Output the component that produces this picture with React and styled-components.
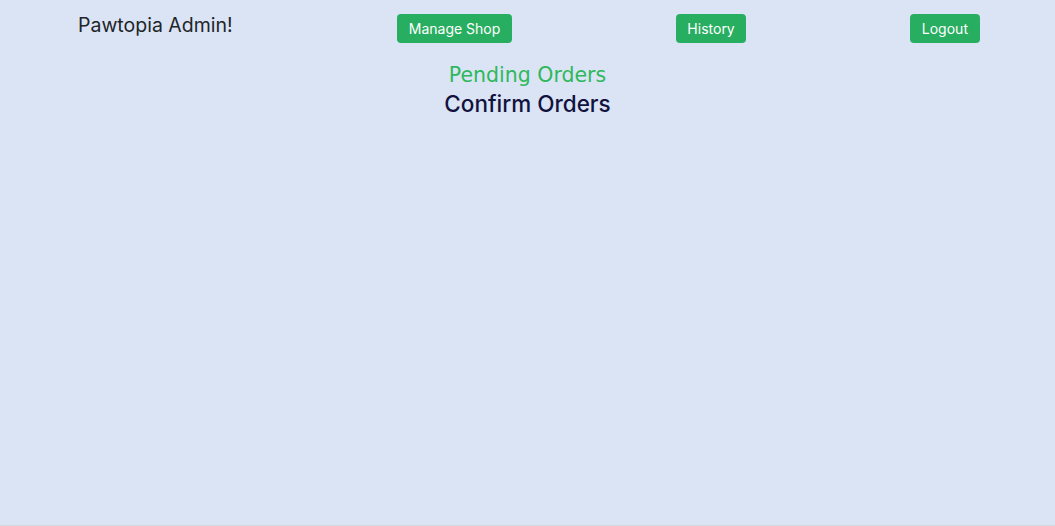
import React from 'react';
import styled, { createGlobalStyle } from 'styled-components';

const GlobalStyle = createGlobalStyle`
  html, body {
    margin: 0;
    padding: 0;
    background: #dbe4f4;
    font-family: Inter, "Noto Sans", sans-serif;
  }
`;

const Page = styled.div`
  min-height: 525px;
  border-bottom: 1px solid #d4d8de;
`;

const Header = styled.header`
  display: flex;
  justify-content: space-between;
  align-items: flex-start;
  padding: 14px 75px 0 78px;
`;

const Brand = styled.h1`
  margin: 0;
  font-size: 19.5px;
  font-weight: 400;
  line-height: 22px;
  color: #212529;
`;

const NavButton = styled.button`
  height: 29px;
  padding: 0 ${(p) => p.$pad || 12}px;
  border: none;
  border-radius: 4px;
  background: #27ae60;
  color: #fff;
  font-family: inherit;
  font-size: 14px;
  cursor: pointer;
`;

const Main = styled.main`
  display: flex;
  flex-direction: column;
  align-items: center;
  margin-top: 18px;
`;

const Subtitle = styled.h2`
  margin: 0;
  font-family: "Comic Sans MS", "DejaVu Sans", sans-serif;
  font-size: 20.5px;
  font-weight: 400;
  line-height: 29px;
  color: #2eb85c;
`;

const Title = styled.h3`
  margin: 0;
  font-size: 22.5px;
  font-weight: 500;
  line-height: 28px;
  color: #12123f;
`;

export default function App() {
  return (
    <Page>
      <GlobalStyle />
      <Header>
        <Brand>Pawtopia Admin!</Brand>
        <NavButton $pad={12}>Manage Shop</NavButton>
        <NavButton $pad={11}>History</NavButton>
        <NavButton $pad={12}>Logout</NavButton>
      </Header>
      <Main>
        <Subtitle>Pending Orders</Subtitle>
        <Title>Confirm Orders</Title>
      </Main>
    </Page>
  );
}
